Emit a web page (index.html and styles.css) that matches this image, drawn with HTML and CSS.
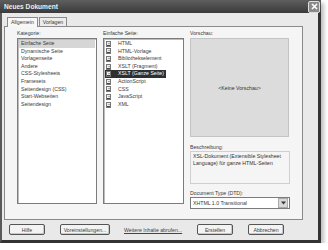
FILE: index.html
```html
<!DOCTYPE html>
<html lang="de">
<head>
    <meta charset="UTF-8">
    <title>Neues Dokument</title>
    <link rel="stylesheet" href="styles.css">
</head>
<body>
    <div class="window">
        <div class="titlebar">
            <span class="title">Neues Dokument</span>
            <span class="close">
                <svg width="7" height="7" viewBox="0 0 7 7"><path d="M1 1L6 6M6 1L1 6" stroke="#fff" stroke-width="1.6"/></svg>
            </span>
        </div>
        <div class="content">
            <div class="tabs">
                <span class="tab active">Allgemein</span>
                <span class="tab">Vorlagen</span>
            </div>
            <div class="panel">
                <div class="col col-cat">
                    <div class="label">Kategorie:</div>
                    <ul class="list">
                        <li class="sel-grey">Einfache Seite</li>
                        <li>Dynamische Seite</li>
                        <li>Vorlagenseite</li>
                        <li>Andere</li>
                        <li>CSS-Stylesheets</li>
                        <li>Framesets</li>
                        <li>Seitendesign (CSS)</li>
                        <li>Start-Webseiten</li>
                        <li>Seitendesign</li>
                    </ul>
                </div>
                <div class="col col-page">
                    <div class="label">Einfache Seite:</div>
                    <ul class="list icons">
                        <li><span class="ico"></span>HTML</li>
                        <li><span class="ico"></span>HTML-Vorlage</li>
                        <li><span class="ico"></span>Bibliothekselement</li>
                        <li><span class="ico"></span>XSLT (Fragment)</li>
                        <li class="sel-dark"><span class="ico"></span>XSLT (Ganze Seite)</li>
                        <li><span class="ico"></span>ActionScript</li>
                        <li><span class="ico"></span>CSS</li>
                        <li><span class="ico"></span>JavaScript</li>
                        <li><span class="ico"></span>XML</li>
                    </ul>
                </div>
                <div class="col col-info">
                    <div class="label">Vorschau:</div>
                    <div class="preview">&lt;Keine Vorschau&gt;</div>
                    <div class="label label-desc">Beschreibung:</div>
                    <div class="desc">XSL-Dokument (Extensible Stylesheet Language) für ganze HTML-Seiten</div>
                    <div class="label label-dtd">Document Type (DTD):</div>
                    <div class="select">
                        <span>XHTML 1.0 Transitional</span>
                        <span class="arrow">
                            <svg width="5" height="4" viewBox="0 0 5 4"><path d="M0 0.5L2.5 3.5L5 0.5Z" fill="#333"/></svg>
                        </span>
                    </div>
                </div>
            </div>
            <div class="footer">
                <button class="btn btn-help">Hilfe</button>
                <button class="btn btn-prefs">Voreinstellungen...</button>
                <a class="more" href="#">Weitere Inhalte abrufen...</a>
                <button class="btn btn-create">Erstellen</button>
                <button class="btn btn-cancel">Abbrechen</button>
            </div>
        </div>
    </div>
</body>
</html>
```

FILE: styles.css
```css
body {
    margin: 0;
    background-color: #ffffff;
    font-family: "Liberation Sans", Arial, sans-serif;
    font-size: 5.2px;
    color: #3a3a3a;
}

.window {
    width: 316px;
    height: 240px;
    background-color: #e9e9e9;
    border-left: 2px solid #5a5a5a;
    border-right: 3px solid #333;
    border-bottom: 3px solid #333;
    box-shadow: 3px 3px 4px rgba(0, 0, 0, 0.25);
}

.titlebar {
    height: 13px;
    margin-left: -2px;
    margin-right: -3px;
    background: linear-gradient(#5e5e5e, #3a3a3a);
    display: flex;
    justify-content: space-between;
    align-items: center;
    padding: 0 1px 0 4px;
}

.title {
    color: #eeeeee;
    font-weight: bold;
    font-size: 6.6px;
}

.close {
    width: 10px;
    height: 10px;
    border: 1px solid #ddd;
    border-radius: 2px;
    background-color: #8a8a8a;
    display: flex;
    justify-content: center;
    align-items: center;
}

.content {
    padding: 3px 0 0 2px;
}

.tabs {
    display: flex;
    padding-left: 3px;
    height: 10px;
    align-items: flex-end;
}

.tab {
    height: 8px;
    line-height: 8px;
    padding: 0 3px;
    border: 1px solid #8a8a8a;
    border-bottom: none;
    background-color: #ececec;
    margin-right: 1px;
}

.tab.active {
    height: 9px;
    background-color: #f7f7f7;
    position: relative;
    top: 1px;
}

.panel {
    width: 285px;
    height: 189px;
    border: 1px solid #8a8a8a;
    background-color: #f5f5f5;
    display: flex;
    gap: 6px;
    padding: 3px 0 0 12px;
}

.label {
    height: 8px;
    line-height: 7px;
}

.list {
    list-style: none;
    margin: 0;
    padding: 1px 0 0 0;
    border: 1px solid #7c7c7c;
    box-shadow: inset 1px 1px 0 #bdbdbd;
    background-color: #fff;
    height: 163px;
}

.col-cat .list {
    width: 78px;
}

.col-page .list {
    width: 79px;
}

.list li {
    height: 7.6px;
    line-height: 7.6px;
    padding-left: 3px;
    white-space: nowrap;
}

.list li.sel-grey {
    background-color: #d6d6d6;
    margin: 0 1px;
    padding-left: 2px;
}

.icons li {
    display: flex;
    align-items: center;
    padding-left: 2px;
}

.icons li.sel-dark {
    background-color: #2f2f2f;
    color: #fff;
    width: 60px;
    margin-left: 1px;
    padding-left: 1px;
}

/* little page icon: light sheet with a dark stamp in the lower left */
.ico {
    width: 5px;
    height: 6px;
    margin-right: 7px;
    background: linear-gradient(#444, #444) 0 3px / 3px 3px no-repeat,
                linear-gradient(#aaa, #aaa) 1px 1px / 3px 1px no-repeat,
                #ededed;
    border: 1px solid #777;
    box-sizing: border-box;
}

.preview {
    width: 97px;
    height: 97px;
    background-color: #dcdcdc;
    border: 1px solid #c4c4c4;
    display: flex;
    justify-content: center;
    align-items: center;
    color: #333;
}

.label-desc {
    margin-top: 7px;
}

.desc {
    width: 95px;
    height: 29px;
    margin-top: -1px;
    border: 1px solid #cfcfcf;
    padding: 1px 1px 1px 2px;
    line-height: 6.6px;
    color: #333;
}

.label-dtd {
    margin-top: 6px;
}

.select {
    width: 96px;
    height: 10px;
    margin-top: -1px;
    border: 1px solid #7c7c7c;
    background-color: #fff;
    display: flex;
    justify-content: space-between;
    align-items: center;
    padding-left: 2px;
}

.arrow {
    width: 8px;
    height: 8px;
    margin-right: 1px;
    background-color: #d8d8d8;
    border: 1px solid #aaa;
    display: flex;
    justify-content: center;
    align-items: center;
}

.footer {
    display: flex;
    align-items: center;
    padding-top: 4px;
    padding-left: 5px;
}

.btn {
    height: 11px;
    padding: 0;
    font-family: "Liberation Sans", Arial, sans-serif;
    font-size: 5.2px;
    color: #3a3a3a;
    background-color: #f3f3f3;
    border: 1px solid #555;
    border-radius: 2px;
    box-shadow: inset -1px -1px 0 #c8c8c8;
}

.btn-help {
    width: 36px;
}

.btn-prefs {
    width: 50px;
    margin-left: 15px;
}

.more {
    margin-left: 14px;
    width: 73px;
    color: #444;
    text-decoration: underline;
}

.btn-create {
    width: 36px;
}

.btn-cancel {
    width: 36px;
    margin-left: 15px;
}
```
